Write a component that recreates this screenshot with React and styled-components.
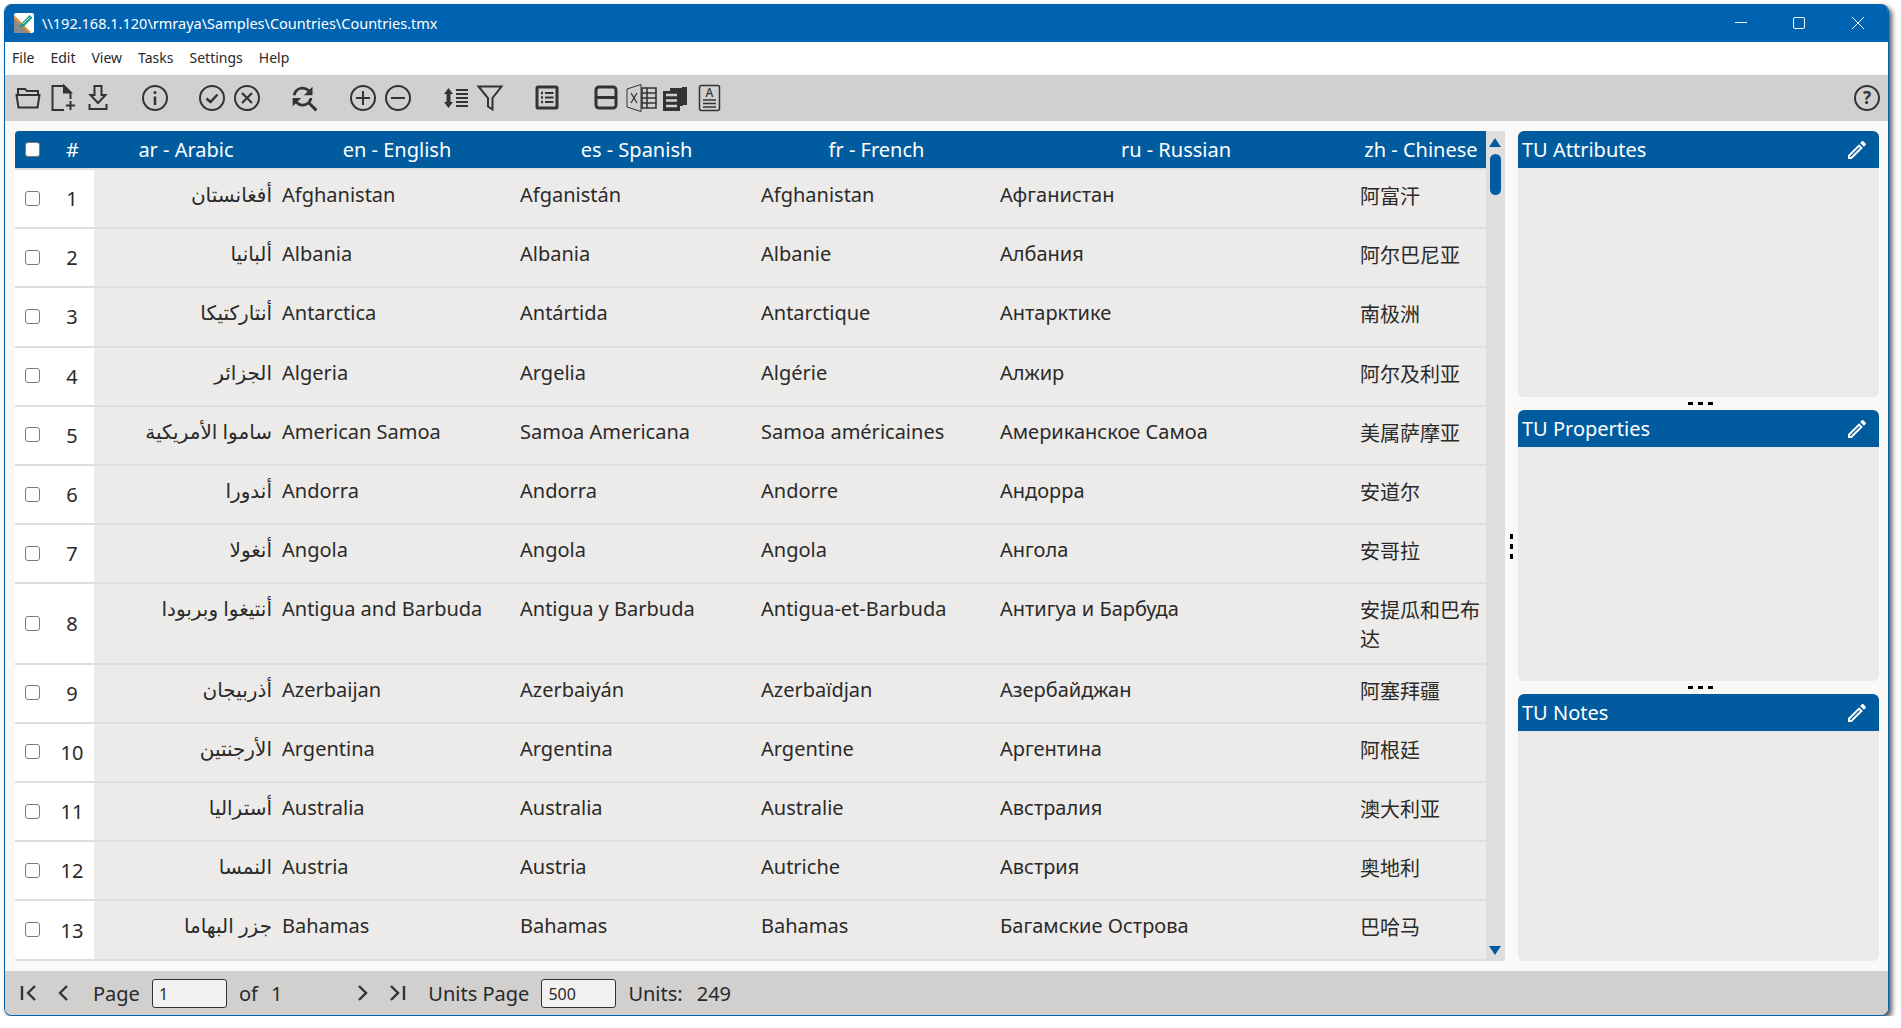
import React from 'react';
import styled, { createGlobalStyle } from 'styled-components';
import { MdFindReplace, MdOutlineEdit } from 'react-icons/md';

const GlobalStyle = createGlobalStyle`
    html, body {
        margin: 0;
        padding: 0;
        background: #fff;
    }
    * {
        box-sizing: border-box;
    }
    #root {
        padding: 4px 0 0 4px;
        font-family: "Noto Sans", "Noto Sans CJK SC", "DejaVu Sans", sans-serif;
        color: #2a2a2a;
    }
`;

const Window = styled.div`
    width: 1885px;
    height: 1012px;
    display: flex;
    flex-direction: column;
    border: 1px solid #0063b1;
    border-top: 0;
    border-radius: 8px;
    overflow: hidden;
    background: #fbf9f8;
    box-shadow: 3px 3px 5px rgba(0, 0, 0, 0.65);
`;

const TitleBar = styled.div`
    height: 38px;
    flex: none;
    display: flex;
    align-items: center;
    background: #0063b1;
    color: #fff;
    padding-left: 9px;
`;

const Logo = styled.svg`
    width: 20px;
    height: 20px;
    margin-right: 8px;
`;

const TitleText = styled.div`
    font-size: 14.5px;
    flex: 1;
`;

const WinButton = styled.svg`
    width: 58px;
    height: 12px;
    margin-right: ${p => p.$mr || 0}px;
`;

const MenuBar = styled.div`
    height: 33px;
    flex: none;
    display: flex;
    align-items: center;
    gap: 16px;
    padding: 0 0 2px 7px;
    background: #fff;
    font-size: 14px;
`;

const Toolbar = styled.div`
    height: 46px;
    flex: none;
    display: flex;
    align-items: center;
    padding-left: 9px;
    padding-right: 7px;
    background: #d1d0ce;
`;

const Tool = styled.svg`
    width: 28px;
    height: 28px;
    flex: none;
    margin-left: ${p => p.$gap || 0}px;
    fill: none;
    stroke: #333;
    stroke-width: ${p => p.$thin ? 1 : 2};
    overflow: visible;
`;

const ToolSpacer = styled.div`
    flex: 1;
`;

const FindIcon = styled(MdFindReplace)`
    flex: none;
    margin-left: 26px;
    color: #333;
`;

const Main = styled.div`
    flex: 1;
    min-height: 0;
    display: flex;
    padding: 10px 9px 10px 10px;
`;

const GridPanel = styled.div`
    width: 1471px;
    flex: none;
    overflow: hidden;
    background: #ecebe9;
`;

const columns = '34px 45px 184px 238px 241px 239px 360px 130px';

const HeaderRow = styled.div`
    display: grid;
    grid-template-columns: ${columns};
    height: 37px;
    align-items: center;
    background: #015c9f;
    color: #fff;
    font-size: 20px;
    border-radius: 4px 0 0 0;
    text-align: center;
    margin-bottom: 2px;
    box-shadow: 0 2px 0 #e0dedd;
`;

const HeaderHash = styled.div`
    padding-left: 2px;
`;

const Row = styled.div`
    display: grid;
    grid-template-columns: ${columns};
    height: ${p => (p.$tall ? 80.4 : 59.2)}px;
    border-bottom: 2px solid #e0dedd;
    font-size: 20px;
`;

const Side = styled.div`
    background: ${p => (p.$clear ? 'transparent' : '#fff')};
    display: flex;
    align-items: center;
    justify-content: center;
    padding-bottom: 1px;
`;

const CheckBox = styled.input`
    appearance: none;
    margin: 0;
    width: 15px;
    height: 15px;
    border: 1.5px solid #7b7b7b;
    border-radius: 3px;
    background: #fff;
`;

const RowNumber = styled(Side)`
    padding-bottom: 0;
    padding-left: 1px;
`;

const Cell = styled.div`
    padding: 11px 4px 0 4px;
    line-height: 27px;
`;

const ArabicCell = styled(Cell)`
    padding-right: 6px;
    text-align: right;
    direction: rtl;
    padding-left: 0;
`;

const ChineseCell = styled(Cell)`
    padding-top: 12px;
    line-height: 29px;
`;

const ScrollBar = styled.div`
    width: 19px;
    flex: none;
    position: relative;
    background: #dfdedd;
`;

const ScrollArrow = styled.div`
    position: absolute;
    left: 3px;
    top: ${p => (p.$down ? 'auto' : '7px')};
    bottom: ${p => (p.$down ? '6px' : 'auto')};
    width: 0;
    height: 0;
    border-left: 6px solid transparent;
    border-right: 6px solid transparent;
    border-bottom: ${p => (p.$down ? '0' : '9px solid #015c9f')};
    border-top: ${p => (p.$down ? '9px solid #015c9f' : '0')};
`;

const ScrollThumb = styled.div`
    position: absolute;
    left: 4px;
    top: 23px;
    width: 11px;
    height: 41px;
    border-radius: 6px;
    background: #015c9f;
`;

const VSplit = styled.div`
    width: 13px;
    flex: none;
    display: flex;
    flex-direction: column;
    align-items: center;
    justify-content: center;
    gap: 5px;
`;

const VDot = styled.div`
    width: 3px;
    height: 5px;
    background: #000;
`;

const SideColumn = styled.div`
    width: 361px;
    flex: none;
    display: flex;
    flex-direction: column;
`;

const Panel = styled.div`
    height: ${p => p.$height}px;
    flex: none;
    display: flex;
    flex-direction: column;
    background: #ebeae9;
    border-radius: 6px;
    overflow: hidden;
`;

const PanelHeader = styled.div`
    height: 37px;
    flex: none;
    display: flex;
    align-items: center;
    justify-content: space-between;
    padding: 0 10px 0 4px;
    background: #015c9f;
    color: #fff;
    font-size: 20px;
`;

const HSplit = styled.div`
    height: 13px;
    flex: none;
    display: flex;
    align-items: center;
    justify-content: center;
    gap: 5px;
    padding-left: 3px;
`;

const HDot = styled.div`
    width: 5px;
    height: 3px;
    background: #000;
`;

const StatusBar = styled.div`
    height: 44px;
    flex: none;
    display: flex;
    align-items: center;
    padding-left: 14px;
    background: #d1d0ce;
    font-size: 20px;
`;

const StatusIcon = styled.svg`
    width: 20px;
    height: 20px;
    flex: none;
    margin-left: ${p => p.$ml || 0}px;
    fill: none;
    stroke: #333;
    stroke-width: 2.4;
`;

const StatusText = styled.span`
    margin-left: ${p => p.$ml || 0}px;
    white-space: pre;
`;

const PageInput = styled.input`
    width: 75px;
    height: 29px;
    flex: none;
    margin-left: ${p => p.$ml || 0}px;
    padding: 2px 6px 0;
    border: 1px solid #333;
    border-radius: 3px;
    background: #f3f1f0;
    font-family: inherit;
    font-size: 16px;
    color: #2a2a2a;
    outline: none;
`;

const countries = [
    ['أفغانستان', 'Afghanistan', 'Afganistán', 'Afghanistan', 'Афганистан', '阿富汗'],
    ['ألبانيا', 'Albania', 'Albania', 'Albanie', 'Албания', '阿尔巴尼亚'],
    ['أنتاركتيكا', 'Antarctica', 'Antártida', 'Antarctique', 'Антарктике', '南极洲'],
    ['الجزائر', 'Algeria', 'Argelia', 'Algérie', 'Алжир', '阿尔及利亚'],
    ['ساموا الأمريكية', 'American Samoa', 'Samoa Americana', 'Samoa américaines', 'Американское Самоа', '美属萨摩亚'],
    ['أندورا', 'Andorra', 'Andorra', 'Andorre', 'Андорра', '安道尔'],
    ['أنغولا', 'Angola', 'Angola', 'Angola', 'Ангола', '安哥拉'],
    ['أنتيغوا وبربودا', 'Antigua and Barbuda', 'Antigua y Barbuda', 'Antigua-et-Barbuda', 'Антигуа и Барбуда', '安提瓜和巴布达'],
    ['أذربيجان', 'Azerbaijan', 'Azerbaiyán', 'Azerbaïdjan', 'Азербайджан', '阿塞拜疆'],
    ['الأرجنتين', 'Argentina', 'Argentina', 'Argentine', 'Аргентина', '阿根廷'],
    ['أستراليا', 'Australia', 'Australia', 'Australie', 'Австралия', '澳大利亚'],
    ['النمسا', 'Austria', 'Austria', 'Autriche', 'Австрия', '奥地利'],
    ['جزر البهاما', 'Bahamas', 'Bahamas', 'Bahamas', 'Багамские Острова', '巴哈马'],
];

const languages = ['ar - Arabic', 'en - English', 'es - Spanish', 'fr - French', 'ru - Russian', 'zh - Chinese'];

function Circle({ gap, children }) {
    return (
        <Tool $gap={gap} viewBox="0 0 28 28">
            <circle cx="14" cy="14" r="12" />
            {children}
        </Tool>
    );
}

function LogoIcon() {
    return (
        <Logo viewBox="0 0 20 20">
            <rect width="20" height="20" rx="2" fill="#fff" />
            <path d="M0 5 L15 20 H1 Q0 20 0 19 Z" fill="#8a8a8a" />
            <path d="M0 3.500 L16 20" stroke="#e8842c" strokeWidth="2" />
            <path d="M7 11 L15.500 2 L18.500 4.500 L10 13.500 L6 14.500 Z" fill="#1f9d8a" />
            <path d="M9 11 L15.500 4.500" stroke="#fff" strokeWidth="0.8" />
        </Logo>
    );
}

function ToolIcons() {
    return (
        <>
            <Tool viewBox="0 0 28 28">
                <path d="M4 10 V5 H11 L13 7 H24 V10" />
                <path d="M2.500 11 H25.500 L23.500 23.500 H4.500 Z" />
            </Tool>
            <Tool $gap={7} viewBox="0 0 28 28">
                <path d="M15 26 H3.500 V2 H15 L21.500 8.500 V15" />
                <path d="M15 2 L21.500 8.500 H15 Z" fill="#333" />
                <path d="M21.500 17 V26 M17 21.500 H26" />
            </Tool>
            <Tool $gap={7} viewBox="0 0 28 28">
                <path d="M10.500 2 H17.500 V11 H21.500 L14 19 L6.500 11 H10.500 Z" />
                <path d="M5.500 20 V25 H22.500 V20" />
            </Tool>
            <Circle gap={29}>
                <path d="M14 12.500 V21" strokeWidth="2.500" />
                <circle cx="14" cy="8.500" r="1.500" fill="#333" stroke="none" />
            </Circle>
            <Circle gap={29}>
                <path d="M8.500 14.500 L12.500 18 L19.500 10.500" strokeWidth="2.500" />
            </Circle>
            <Circle gap={7}>
                <path d="M9 9 L19 19 M19 9 L9 19" strokeWidth="2.200" />
            </Circle>
            <FindIcon size={34} />
            <Circle gap={28}>
                <path d="M14 7 V21 M7 14 H21" />
            </Circle>
            <Circle gap={7}>
                <path d="M7 14 H21" />
            </Circle>
            <Tool $gap={30} viewBox="0 0 28 28">
                <path d="M6.500 4 L11 10 H2 Z M6.500 24 L11 18 H2 Z" fill="#333" stroke="none" />
                <rect x="4.500" y="9" width="4" height="10" fill="#333" stroke="none" />
                <path d="M14 6 H26 M14 10 H26 M14 14 H26 M14 18 H26 M14 22 H26" strokeWidth="1.800" />
            </Tool>
            <Tool $gap={6} viewBox="0 0 28 28">
                <path d="M2.500 2.500 H25.500 L16.500 14 V25.500 L12 22.500 V14 Z" />
            </Tool>
            <Tool $gap={29} viewBox="0 0 28 28">
                <rect x="4" y="3" width="20" height="21" rx="1" strokeWidth="3" />
                <path d="M8 9 H10 M8 13.500 H10 M8 18 H10" strokeWidth="2.500" />
                <path d="M12 9 H20.500 M12 13.500 H20.500 M12 18 H20.500" strokeWidth="2" />
            </Tool>
            <Tool $gap={31} viewBox="0 0 28 28">
                <rect x="4" y="3" width="20" height="21" rx="3" strokeWidth="3" />
                <path d="M4 13.500 H24" strokeWidth="3" />
            </Tool>
            <Tool $gap={7} $thin viewBox="0 0 28 28">
                <path d="M0 5 L14 0.500 V27.500 L0 23 Z" />
                <path d="M4 9 L10 19 M10 9 L4 19" strokeWidth="1.300" />
                <path d="M15 4 H29 V24 H15 Z M15 9 H29 M15 14 H29 M15 19 H29 M20 4 V24" strokeWidth="1.600" />
            </Tool>
            <Tool $gap={6} viewBox="0 0 28 28">
                <path d="M9 4 H22 V22 H9 Z" fill="#333" stroke="none" />
                <path d="M21 3 H26 V21 H21 Z" fill="#333" stroke="none" />
                <path d="M2 7 H19 V27 H2 Z" fill="#333" stroke="none" />
                <path d="M5 11 H16 M5 16.500 H16 M5 22 H16" stroke="#d1d0ce" strokeWidth="2.500" />
            </Tool>
            <Tool $gap={6} viewBox="0 0 28 28">
                <rect x="4.500" y="1.500" width="20" height="25" rx="2" strokeWidth="1.500" />
                <text x="14.500" y="13" textAnchor="middle" fontFamily="Noto Sans" fontSize="12" fontWeight="500" fill="#333" stroke="none">A</text>
                <path d="M8 16 H21 M8 19.500 H21 M8 23 H21" strokeWidth="1.500" />
            </Tool>
        </>
    );
}

function App() {
    return (
        <>
            <GlobalStyle />
            <Window>
                <TitleBar>
                    <LogoIcon />
                    <TitleText>\\192.168.1.120\rmraya\Samples\Countries\Countries.tmx</TitleText>
                    <WinButton viewBox="0 0 58 12" fill="none" stroke="#fff">
                        <path d="M23 5.500 H35" />
                    </WinButton>
                    <WinButton viewBox="0 0 58 12" fill="none" stroke="#fff">
                        <rect x="23.500" y="0.500" width="11" height="11" rx="1.500" />
                    </WinButton>
                    <WinButton $mr={2} viewBox="0 0 58 12" fill="none" stroke="#fff">
                        <path d="M24 0 L36 12 M36 0 L24 12" />
                    </WinButton>
                </TitleBar>
                <MenuBar>
                    <span>File</span>
                    <span>Edit</span>
                    <span>View</span>
                    <span>Tasks</span>
                    <span>Settings</span>
                    <span>Help</span>
                </MenuBar>
                <Toolbar>
                    <ToolIcons />
                    <ToolSpacer />
                    <Circle>
                        <text x="14" y="20" textAnchor="middle" fontFamily="Noto Sans" fontSize="17" fontWeight="700" fill="#333" stroke="none">?</text>
                    </Circle>
                </Toolbar>
                <Main>
                    <GridPanel>
                        <HeaderRow>
                            <Side $clear>
                                <CheckBox type="checkbox" />
                            </Side>
                            <HeaderHash>#</HeaderHash>
                            {languages.map(l => <div key={l}>{l}</div>)}
                        </HeaderRow>
                        {countries.map((c, i) => (
                            <Row key={c[1]} $tall={i === 7}>
                                <Side><CheckBox type="checkbox" /></Side>
                                <RowNumber>{i + 1}</RowNumber>
                                <ArabicCell>{c[0]}</ArabicCell>
                                <Cell>{c[1]}</Cell>
                                <Cell>{c[2]}</Cell>
                                <Cell>{c[3]}</Cell>
                                <Cell>{c[4]}</Cell>
                                <ChineseCell>{c[5]}</ChineseCell>
                            </Row>
                        ))}
                    </GridPanel>
                    <ScrollBar>
                        <ScrollArrow />
                        <ScrollThumb />
                        <ScrollArrow $down />
                    </ScrollBar>
                    <VSplit>
                        <VDot />
                        <VDot />
                        <VDot />
                    </VSplit>
                    <SideColumn>
                        <Panel $height={266}>
                            <PanelHeader>TU Attributes<MdOutlineEdit size={24} /></PanelHeader>
                        </Panel>
                        <HSplit><HDot /><HDot /><HDot /></HSplit>
                        <Panel $height={271}>
                            <PanelHeader>TU Properties<MdOutlineEdit size={24} /></PanelHeader>
                        </Panel>
                        <HSplit><HDot /><HDot /><HDot /></HSplit>
                        <Panel $height={267}>
                            <PanelHeader>TU Notes<MdOutlineEdit size={24} /></PanelHeader>
                        </Panel>
                    </SideColumn>
                </Main>
                <StatusBar>
                    <StatusIcon viewBox="0 0 20 20"><path d="M3 3 V17 M16 3 L9 10 L16 17" /></StatusIcon>
                    <StatusIcon $ml={15} viewBox="0 0 20 20"><path d="M13 3 L6 10 L13 17" /></StatusIcon>
                    <StatusText $ml={19}>Page</StatusText>
                    <PageInput $ml={12} defaultValue="1" />
                    <StatusText $ml={12}>of</StatusText>
                    <StatusText $ml={13}>1</StatusText>
                    <StatusIcon $ml={70} viewBox="0 0 20 20"><path d="M7 3 L14 10 L7 17" /></StatusIcon>
                    <StatusIcon $ml={15} viewBox="0 0 20 20"><path d="M4 3 L11 10 L4 17 M17 3 V17" /></StatusIcon>
                    <StatusText $ml={21}>Units Page</StatusText>
                    <PageInput $ml={12} defaultValue="500" />
                    <StatusText $ml={12}>Units:</StatusText>
                    <StatusText $ml={14}>249</StatusText>
                </StatusBar>
            </Window>
        </>
    );
}

export default App;
